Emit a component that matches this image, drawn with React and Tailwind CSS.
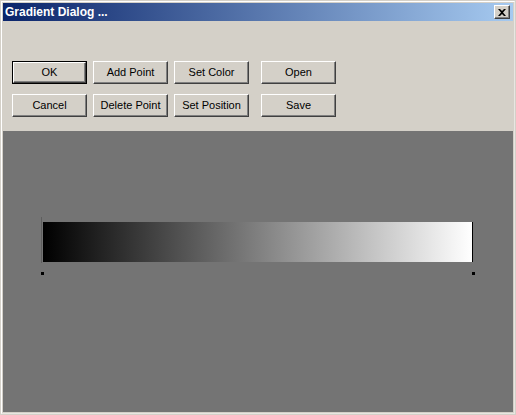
export default function App() {
  const btn =
    "w-[75px] h-[23px] flex items-center justify-center bg-[#d4d0c8] text-[11px] text-black border-t border-l border-t-white border-l-white border-b border-r border-b-[#404040] border-r-[#404040] shadow-[inset_-1px_-1px_0_#808080]";
  const font = { fontFamily: "Tahoma, 'Liberation Sans', 'DejaVu Sans', sans-serif" };
  return (
    <div className="w-[516px] h-[415px] bg-[#d4d0c8] flex flex-col border-t border-l border-t-[#d4d0c8] border-l-[#d4d0c8] border-b border-r border-b-[#d4d0c8] border-r-[#d4d0c8]" style={font}>
      <div className="flex-1 flex flex-col border-t border-l border-t-white border-l-white border-b border-r border-b-[#e8e6e2] border-r-[#e8e6e2] p-[1px]">
        {/* title bar */}
        <div className="h-[18px] flex items-center justify-between bg-[linear-gradient(to_right,#0a246a,#a6caf0)] pl-[2px] pr-[3px]">
          <span className="text-white font-bold text-[12px] leading-none" style={{ fontFamily: "'Liberation Sans', Arial, sans-serif" }}>
            Gradient Dialog ...
          </span>
          <div className="w-[16px] h-[14px] bg-[#d4d0c8] flex items-center justify-center border-t border-l border-t-white border-l-white border-b border-r border-b-[#404040] border-r-[#404040] shadow-[inset_-1px_-1px_0_#808080]">
            <svg width="8" height="7" viewBox="0 0 8 7">
              <path d="M0 0h2l2 2 2-2h2L5 3.5 8 7H6L4 5 2 7H0l3-3.5z" fill="#000" />
            </svg>
          </div>
        </div>
        {/* client */}
        <div className="flex-1 flex flex-col mt-[1px]">
          <div className="h-[109px] pt-[39px] pl-[9px] flex flex-col gap-[10px]">
            <div className="flex gap-[6px]">
              <div className="w-[75px] h-[23px] border border-black">
                <div className="w-full h-full flex items-center justify-center bg-[#d4d0c8] text-[11px] text-black border-t border-l border-t-white border-l-white border-b border-r border-b-[#404040] border-r-[#404040] shadow-[inset_-1px_-1px_0_#808080]">
                  OK
                </div>
              </div>
              <div className={btn}>Add Point</div>
              <div className={btn}>Set Color</div>
              <div className={btn + " ml-[6px]"}>Open</div>
            </div>
            <div className="flex gap-[6px]">
              <div className={btn}>Cancel</div>
              <div className={btn}>Delete Point</div>
              <div className={btn}>Set Position</div>
              <div className={btn + " ml-[6px]"}>Save</div>
            </div>
          </div>
          <div className="flex-1 bg-[#747474] pt-[91px] pl-[38px]">
            <div className="flex">
              <div className="w-[1px] h-[46px] -mt-[5px] bg-[#5e5e5e]" />
              <div className="w-[1px]" />
              <div className="w-[430px] h-[40px] bg-[linear-gradient(to_right,#000000,#ffffff)] border-r border-r-black" />
            </div>
            <div className="w-[434px] flex justify-between mt-[9px]">
              <div className="w-[3px] h-[3px] bg-black" />
              <div className="w-[3px] h-[3px] bg-black" />
            </div>
          </div>
        </div>
      </div>
    </div>
  );
}
